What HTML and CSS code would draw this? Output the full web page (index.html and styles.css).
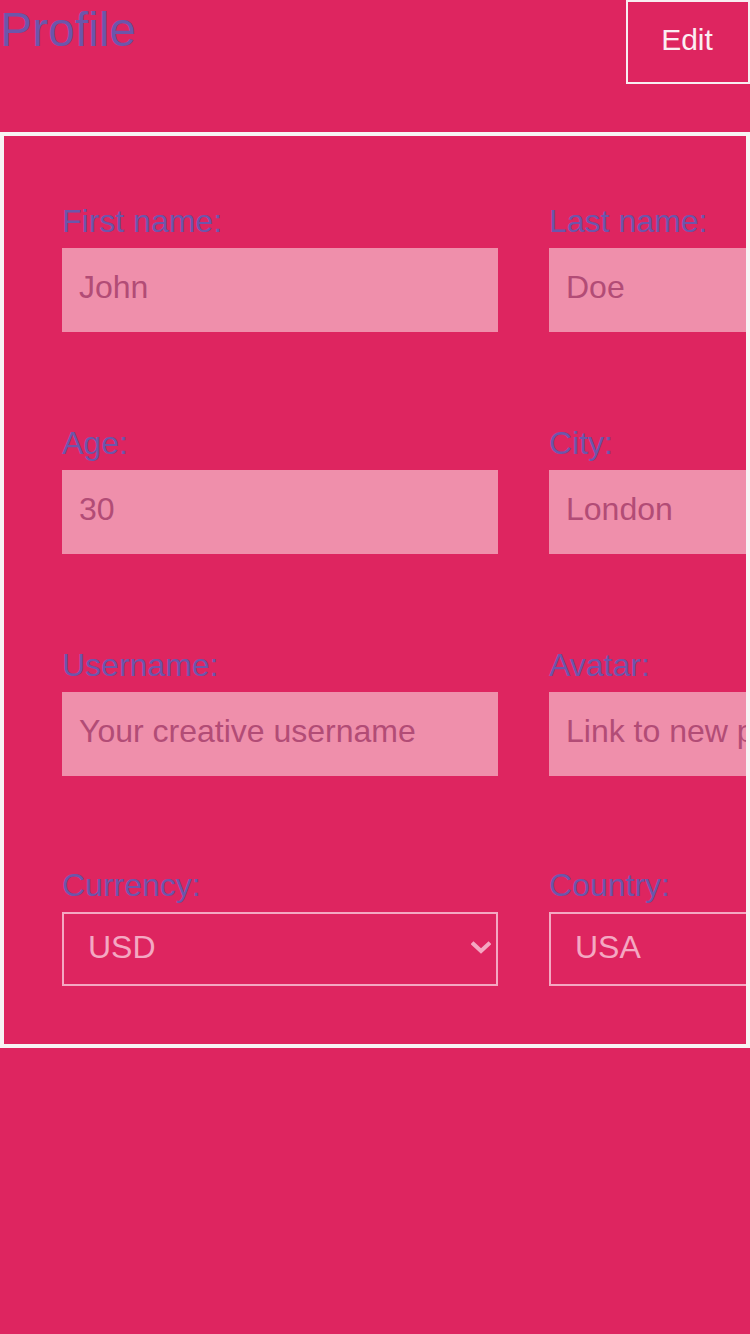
FILE: index.html
```html
<!DOCTYPE html>
<html lang="en">
<head>
<meta charset="utf-8">
<title>Profile</title>
<link rel="stylesheet" href="styles.css">
</head>
<body>
<header class="top">
  <h1 class="title">Profile</h1>
  <button class="edit-btn" type="button">Edit</button>
</header>
<section class="panel">
  <form class="form">
    <div class="field">
      <label class="label" for="fn">First name:</label>
      <input class="input" id="fn" type="text" value="John">
    </div>
    <div class="field">
      <label class="label" for="ln">Last name:</label>
      <input class="input" id="ln" type="text" value="Doe">
    </div>
    <div class="field">
      <label class="label" for="age">Age:</label>
      <input class="input" id="age" type="text" value="30">
    </div>
    <div class="field">
      <label class="label" for="city">City:</label>
      <input class="input" id="city" type="text" value="London">
    </div>
    <div class="field">
      <label class="label" for="un">Username:</label>
      <input class="input" id="un" type="text" placeholder="Your creative username">
    </div>
    <div class="field">
      <label class="label" for="av">Avatar:</label>
      <input class="input" id="av" type="text" placeholder="Link to new picture">
    </div>
    <div class="field field-select">
      <label class="label" for="cur">Currency:</label>
      <div class="select-wrap">
        <select class="select" id="cur">
          <option>USD</option>
          <option>EUR</option>
          <option>GBP</option>
        </select>
        <svg class="chevron" width="20" height="14" viewBox="0 0 20 14" aria-hidden="true">
          <path d="M2.5 3 L10 10 L17.5 3" fill="none" stroke="#f4a8c2" stroke-width="4" stroke-linecap="square"/>
        </svg>
      </div>
    </div>
    <div class="field field-select">
      <label class="label" for="cty">Country:</label>
      <div class="select-wrap">
        <select class="select" id="cty">
          <option>USA</option>
          <option>UK</option>
        </select>
        <svg class="chevron" width="20" height="14" viewBox="0 0 20 14" aria-hidden="true">
          <path d="M2.5 3 L10 10 L17.5 3" fill="none" stroke="#f4a8c2" stroke-width="4" stroke-linecap="square"/>
        </svg>
      </div>
    </div>
  </form>
</section>
</body>
</html>
```

FILE: styles.css
```css
html, body {
  margin: 0;
  padding: 0;
  background: #de2560;
  font-family: "Liberation Sans", Arial, sans-serif;
}

.top {
  display: flex;
  justify-content: space-between;
  align-items: flex-start;
  height: 132px;
}

.title {
  margin: 0;
  padding-top: 2px;
  font-size: 48px;
  font-weight: normal;
  line-height: 55px;
  color: #6c56ab;
}

.edit-btn {
  box-sizing: border-box;
  width: 124px;
  height: 84px;
  margin: 0;
  padding: 21px 2px 25px 0;
  background: transparent;
  border: 2px solid #f8eef2;
  color: #fbeef3;
  font-family: "Liberation Sans", Arial, sans-serif;
  font-size: 30px;
  line-height: 34px;
}

.panel {
  box-sizing: border-box;
  width: 750px;
  height: 916px;
  border: 4px solid #f7f3f4;
  overflow: hidden;
  padding: 67px 58px 58px;
}

.form {
  display: grid;
  grid-template-columns: 436px 436px;
  column-gap: 51px;
  row-gap: 93px;
}

.field {
  display: flex;
  flex-direction: column;
}

.field-select {
  margin-top: -2px;
}

.label {
  display: block;
  font-size: 32px;
  line-height: 37px;
  color: #6c56ab;
  margin-bottom: 8px;
}

.input {
  box-sizing: border-box;
  width: 436px;
  height: 84px;
  margin: 0;
  padding: 0 17px 6px;
  border: none;
  outline: none;
  background: #ef8fab;
  color: #b24c76;
  font-family: "Liberation Sans", Arial, sans-serif;
  font-size: 32px;
}

.input::placeholder {
  color: #b24c76;
  opacity: 1;
}

.select-wrap {
  position: relative;
  width: 436px;
}

.select {
  box-sizing: border-box;
  width: 436px;
  height: 74px;
  margin: 0;
  padding: 0 24px 4px;
  border: 2px solid #f4a8c2;
  border-radius: 0;
  background: transparent;
  color: #f4a8c2;
  font-family: "Liberation Sans", Arial, sans-serif;
  font-size: 32px;
  -webkit-appearance: none;
  appearance: none;
  outline: none;
}

.chevron {
  position: absolute;
  right: 7px;
  top: 29px;
  pointer-events: none;
}
```
